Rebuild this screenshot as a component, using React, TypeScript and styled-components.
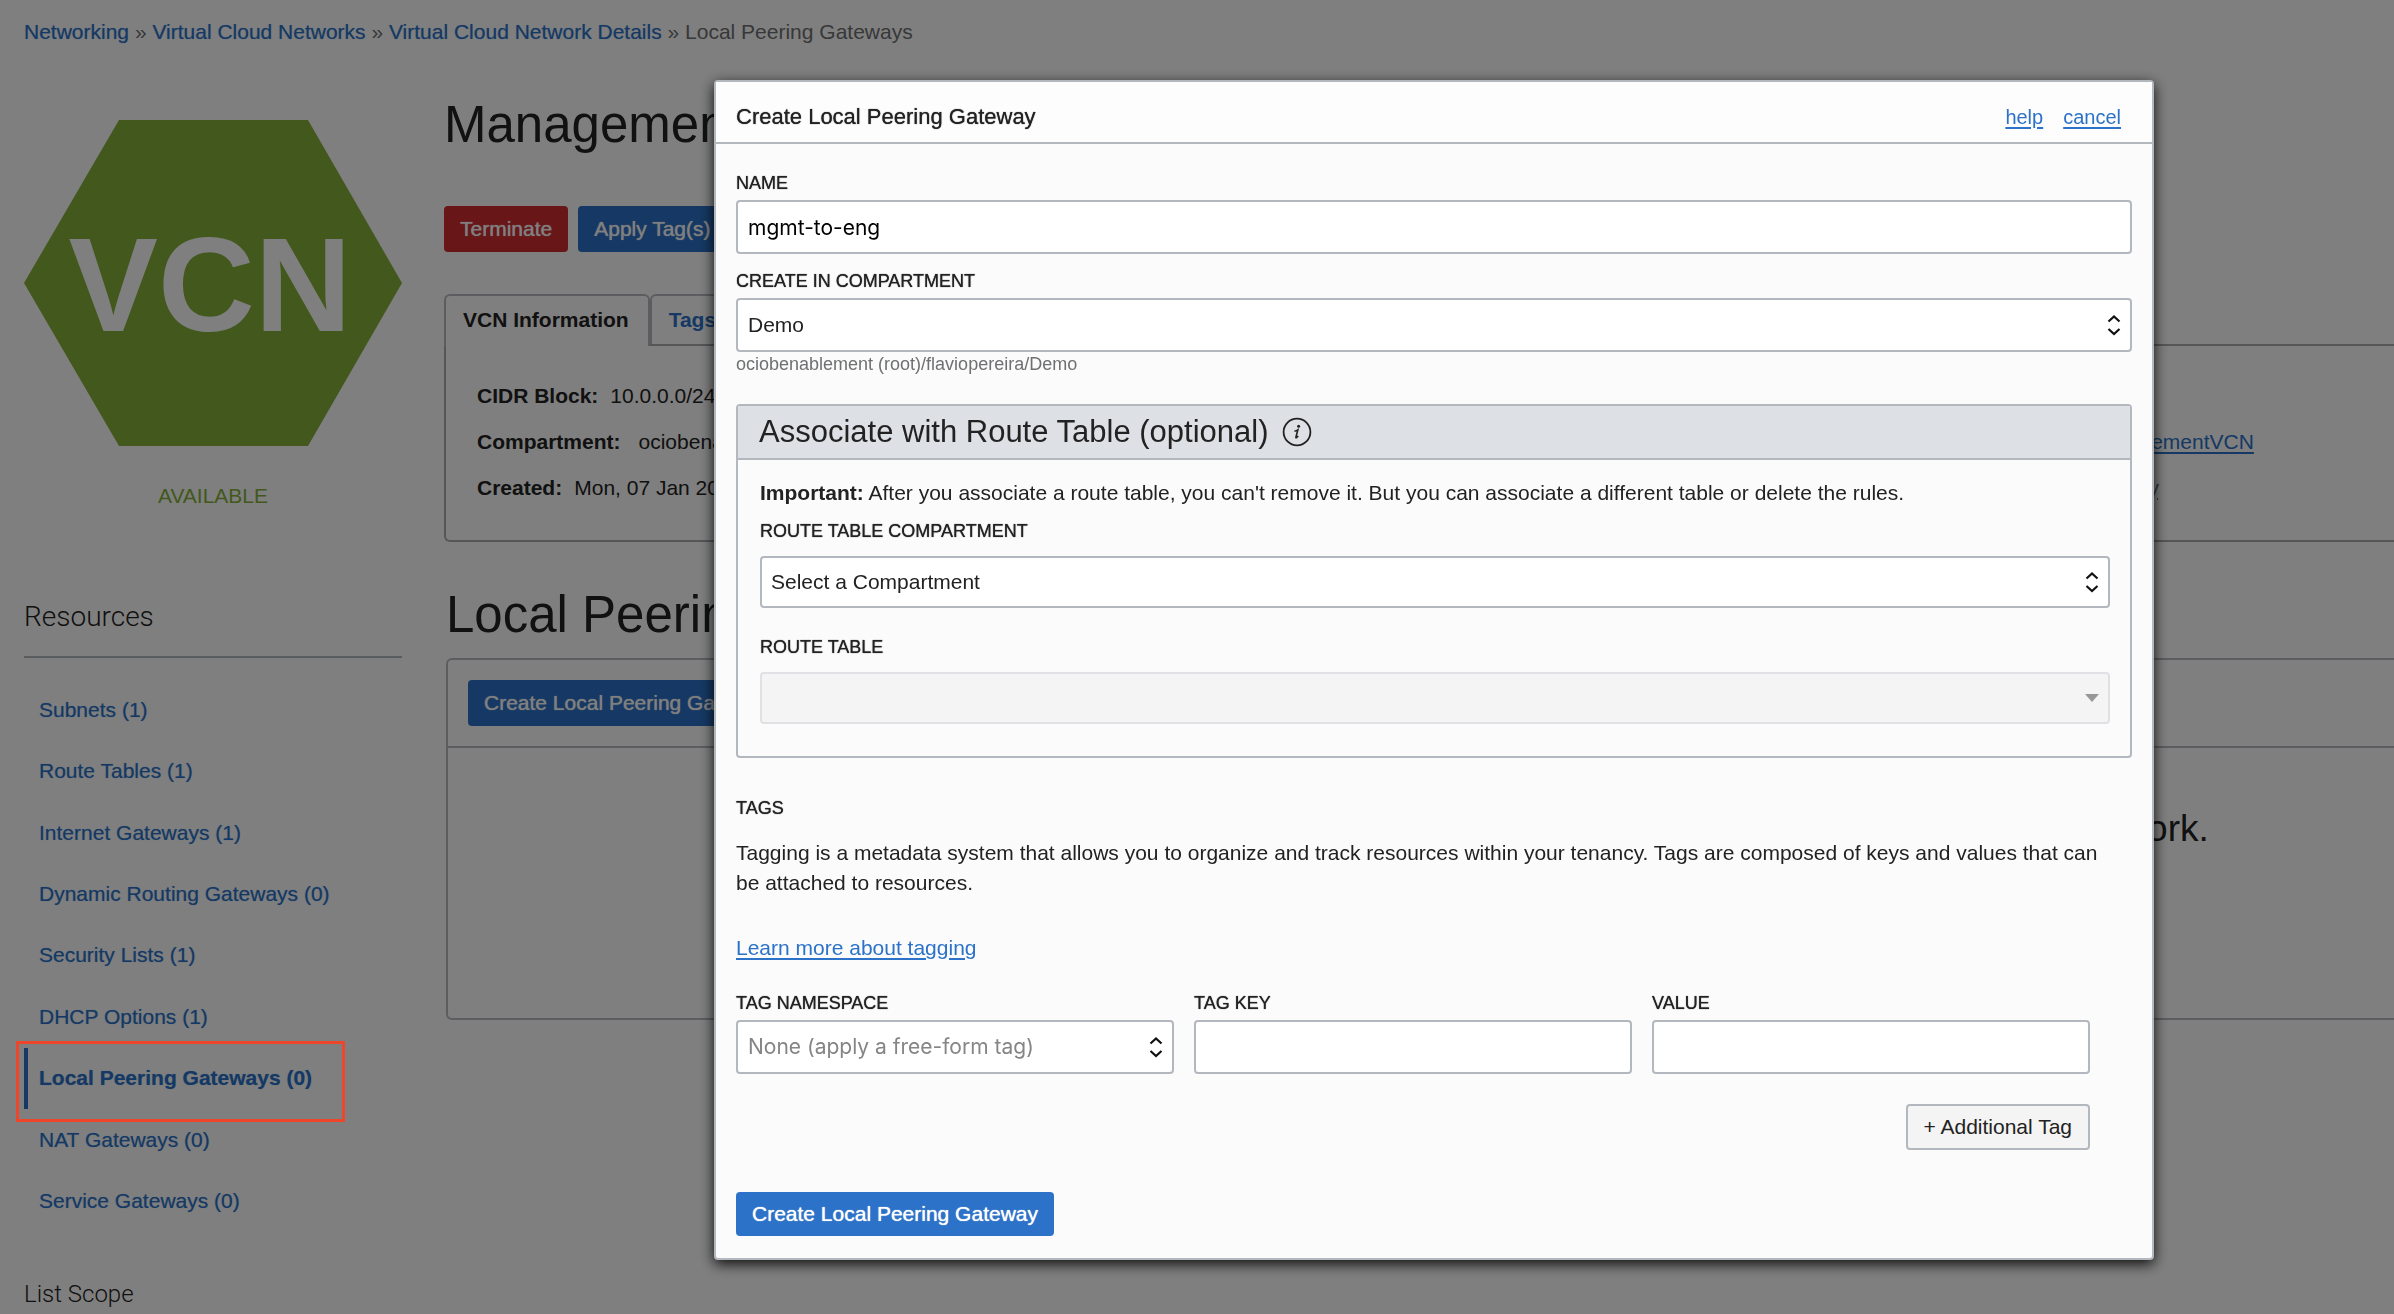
import React from "react";
import styled, { createGlobalStyle, css } from "styled-components";

const color = {
  text: "#222222",
  muted: "#6f7072",
  link: "#2b72c8",
  line: "#b3b8bf",
  green: "#84b13a",
  red: "#d12c2f",
};

const GlobalStyle = createGlobalStyle`
  *, *::before, *::after { box-sizing: border-box; }
  body {
    margin: 0;
    background: #ffffff;
    color: ${color.text};
    font-family: "Liberation Sans", Arial, Helvetica, sans-serif;
    font-size: 21px;
    line-height: 30px;
    overflow: hidden;
  }
  button, input, select { font: inherit; color: inherit; margin: 0; }
  h1, h2, h3, p, ul, dl, dd { margin: 0; padding: 0; font-weight: 400; }
`;

/* Between regular and bold: thickens the strokes of the regular face. */
const medium = css`
  text-shadow: 0 0 1px currentColor;
`;

const Link = styled.a<{ $underline?: boolean }>`
  color: ${color.link};
  text-decoration: ${(p) => (p.$underline ? "underline" : "none")};
  text-decoration-thickness: 2px;
  text-underline-offset: 3px;
`;

const Button = styled.button<{ $kind: "primary" | "danger" | "plain" }>`
  height: 46px;
  padding: 0 16px;
  border: 0;
  border-radius: 4px;
  white-space: nowrap;
  color: #ffffff;
  ${(p) =>
    p.$kind === "plain"
      ? css`
          border: 2px solid ${color.line};
          background: #f4f4f4;
          color: ${color.text};
        `
      : css`
          background: ${p.$kind === "danger" ? color.red : color.link};
          ${medium}
        `}
`;

/* ---------- page behind the dialog ---------- */

const Page = styled.div`
  padding: 17px 0 0 24px;
`;

const Breadcrumb = styled.nav`
  color: ${color.muted};
  a {
    text-shadow: 0 0 1px rgba(43, 114, 200, 0.5);
  }
`;

const Columns = styled.div`
  display: grid;
  grid-template-columns: 378px minmax(0, 1fr);
  column-gap: 42px;
  margin-top: 48px;
`;

const Sidebar = styled.aside`
  padding-top: 25px;
`;

const Hexagon = styled.svg`
  display: block;
  width: 100%;
  height: auto;
`;

const Status = styled.p`
  margin-top: 35px;
  text-align: center;
  color: ${color.green};
`;

const SideHeading = styled.h2`
  margin-top: 86px;
  padding-bottom: 19px;
  border-bottom: 2px solid ${color.line};
  font-family: Roboto, "Liberation Sans", sans-serif;
  font-weight: 300;
  font-size: 28px;
  line-height: 40px;
`;

const ScopeHeading = styled.h3`
  margin-top: 42px;
  font-family: Roboto, "Liberation Sans", sans-serif;
  font-weight: 300;
  font-size: 24px;
  line-height: 40px;
`;

const ResourceList = styled.ul`
  display: grid;
  grid-auto-rows: 1fr;
  height: 553px;
  margin-top: 21px;
  list-style: none;
`;

const ResourceItem = styled.li<{ $active?: boolean }>`
  position: relative;
  display: flex;
  align-items: center;
  padding-left: 11px;
  border-left: 4px solid ${(p) => (p.$active ? color.link : "transparent")};
  font-weight: ${(p) => (p.$active ? 700 : 400)};
  a {
    text-shadow: 0 0 1px rgba(43, 114, 200, 0.5);
  }
`;

const Callout = styled.span`
  position: absolute;
  z-index: 20;
  left: -12px;
  top: -7px;
  width: 329px;
  height: 81px;
  border: 3px solid #ee462a;
  pointer-events: none;
`;

const Main = styled.main`
  min-width: 0;
`;

const Title = styled.h1`
  font-size: 51px;
  line-height: 60px;
`;

const Actions = styled.div`
  display: flex;
  gap: 10px;
  margin-top: 51px;
`;

const Tabs = styled.div`
  display: flex;
  margin-top: 42px;
`;

const Tab = styled.button<{ $active?: boolean }>`
  height: 50px;
  padding: 0 19px 0 17px;
  border: 2px solid #bbbbc3;
  border-bottom: 0;
  border-radius: 6px 6px 0 0;
  background: #ffffff;
  color: ${(p) => (p.$active ? color.text : color.link)};
  font-weight: 700;
  line-height: 48px;
  ${(p) =>
    p.$active &&
    css`
      position: relative;
      height: 52px;
      margin-bottom: -2px;
      padding-bottom: 2px;
    `}
`;

const InfoPanel = styled.div`
  display: grid;
  grid-template-columns: 613fr 387fr;
  padding: 27px 0 29px 31px;
  border: 2px solid #adadb2;
  border-right: 0;
  border-bottom-left-radius: 6px;
`;

const Facts = styled.dl`
  line-height: 46px;
  white-space: nowrap;
`;

const Fact = styled.div<{ $wide?: boolean }>`
  display: flex;
  gap: ${(p) => (p.$wide ? 18 : 12)}px;
  height: 46px;
  dt {
    font-weight: 700;
  }
`;

const Hint = styled.span`
  color: ${color.muted};
  text-decoration: underline dotted 2px;
  text-underline-offset: 3px;
`;

const ListSection = styled.section`
  margin: 43px 0 0 2px;
`;

const ListTitle = styled.h2`
  font-size: 51px;
  line-height: 60px;
`;

const ListPanel = styled.div`
  margin-top: 13px;
  border: 2px solid #bbbbc3;
  border-right: 0;
  border-radius: 6px 0 0 6px;
`;

const ListToolbar = styled.div`
  padding: 20px;
  border-bottom: 2px solid #bbbbc3;
`;

const EmptyState = styled.p`
  padding: 56px 0 164px 112px;
  text-align: center;
  white-space: nowrap;
  font-size: 37px;
  line-height: 50px;
`;

/* ---------- dialog ---------- */

const Overlay = styled.div`
  position: fixed;
  inset: 0;
  z-index: 10;
  padding: 80px 240px 0 714px;
  background: rgba(0, 0, 0, 0.5);
`;

const Dialog = styled.form`
  border: 2px solid ${color.line};
  border-radius: 4px;
  background: #fbfbfb;
  box-shadow: 0 4px 14px rgba(0, 0, 0, 0.9);
`;

const DialogHeader = styled.header`
  display: flex;
  justify-content: space-between;
  padding: 20px 31px 10px 20px;
  border-bottom: 2px solid ${color.line};
  background: #fdfdfd;
`;

const DialogTitle = styled.h2`
  font-size: 22px;
  ${medium}
`;

const DialogLinks = styled.nav`
  display: flex;
  gap: 20px;
  font-size: 20px;
`;

const DialogBody = styled.div`
  padding: 27px 20px 22px;
`;

const Field = styled.div<{ $top?: number; $gap?: number }>`
  display: grid;
  row-gap: ${(p) => p.$gap ?? 5}px;
  margin-top: ${(p) => p.$top ?? 0}px;
`;

const Label = styled.label`
  font-size: 18px;
  line-height: 24px;
  ${medium}
`;

const TagsHeading = styled.h3`
  margin-top: 38px;
  font-size: 18px;
  line-height: 24px;
  ${medium}
`;

const control = css`
  width: 100%;
  height: 54px;
  padding: 0 10px;
  border: 2px solid ${color.line};
  border-radius: 4px;
  background: #ffffff;
`;

const TextInput = styled.input`
  ${control}
  font-family: Inter, "Liberation Sans", sans-serif;
  color: #000000;
`;

const SelectWrap = styled.div`
  position: relative;
`;

const SelectBox = styled.select<{ $short?: boolean; $placeholder?: boolean }>`
  ${control}
  appearance: none;
  display: block;
  ${(p) =>
    p.$short &&
    css`
      height: 52px;
      padding: 0 9px;
    `}
  ${(p) =>
    p.$placeholder &&
    css`
      font-family: Inter, "Liberation Sans", sans-serif;
      color: #858585;
    `}
  &:disabled {
    border-color: #dfe1e5;
    background: #f4f4f4;
    opacity: 1;
  }
`;

const SelectIcon = styled.svg`
  position: absolute;
  top: 50%;
  right: 10px;
  transform: translateY(-50%);
  pointer-events: none;
`;

const Path = styled.p`
  color: ${color.muted};
  font-size: 18px;
  line-height: 24px;
`;

const Group = styled.section`
  margin-top: 28px;
  border: 2px solid ${color.line};
  border-radius: 4px;
`;

const GroupHeader = styled.header`
  display: flex;
  align-items: center;
  gap: 13px;
  padding-left: 21px;
  border-bottom: 2px solid ${color.line};
  background: #dde1e5;
  h3 {
    font-size: 31px;
    line-height: 52px;
  }
`;

const GroupBody = styled.div`
  padding: 18px 20px 32px 22px;
`;

const Paragraph = styled.p<{ $top?: number }>`
  margin-top: ${(p) => p.$top ?? 0}px;
  padding-right: 20px;
`;

const TagArea = styled.div`
  padding-right: 42px;
`;

const TagRow = styled.div`
  display: grid;
  grid-template-columns: repeat(3, 1fr);
  column-gap: 20px;
  margin-top: 28px;
`;

const TagActions = styled.div`
  display: flex;
  justify-content: flex-end;
  margin-top: 30px;
`;

const SubmitButton = styled(Button)`
  height: 44px;
  margin-top: 42px;
`;

interface SelectProps {
  id: string;
  options: string[];
  short?: boolean;
  placeholder?: boolean;
  disabled?: boolean;
}

function Select({ id, options, short, placeholder, disabled }: SelectProps) {
  return (
    <SelectWrap>
      <SelectBox id={id} $short={short} $placeholder={placeholder} disabled={disabled}>
        {options.map((o) => (
          <option key={o}>{o}</option>
        ))}
      </SelectBox>
      {disabled ? (
        <SelectIcon width="16" height="8" viewBox="0 0 16 8">
          <path d="M1 0h14L8 8z" fill="#979797" />
        </SelectIcon>
      ) : (
        <SelectIcon width="16" height="24" viewBox="0 0 16 24" fill="none" stroke="#111" strokeWidth="2.2">
          <path d="M2.5 8.5 8 3.5l5.5 5M2.5 16l5.5 5 5.5-5" />
        </SelectIcon>
      )}
    </SelectWrap>
  );
}

function InfoIcon() {
  return (
    <svg width="30" height="30" viewBox="0 0 30 30" role="img" aria-label="Information">
      <circle cx="15" cy="15" r="13.4" fill="none" stroke="#222" strokeWidth="1.8" />
      <circle cx="16.6" cy="9.3" r="1.5" fill="#222" />
      <path
        d="M12.4 14.2c1.5-.3 2.6-.7 3.4-1.3l-1.9 7.4c-.2.9.6.7 2.3-1.3"
        fill="none"
        stroke="#222"
        strokeWidth="1.6"
      />
    </svg>
  );
}

const resources = [
  "Subnets (1)",
  "Route Tables (1)",
  "Internet Gateways (1)",
  "Dynamic Routing Gateways (0)",
  "Security Lists (1)",
  "DHCP Options (1)",
  "Local Peering Gateways (0)",
  "NAT Gateways (0)",
  "Service Gateways (0)",
];
const activeResource = "Local Peering Gateways (0)";

export default function App() {
  return (
    <>
      <GlobalStyle />
      <Page>
        <Breadcrumb aria-label="Breadcrumb">
          <Link href="#networking">Networking</Link> » <Link href="#vcns">Virtual Cloud Networks</Link> »{" "}
          <Link href="#vcn">Virtual Cloud Network Details</Link> » Local Peering Gateways
        </Breadcrumb>
        <Columns>
          <Sidebar>
            <Hexagon viewBox="0 0 378 326" role="img" aria-label="VCN">
              <path d="M95 0h189l94 163-94 163H95L0 163z" fill={color.green} />
              <text
                x="186"
                y="211"
                textAnchor="middle"
                fontFamily="Liberation Sans, Arial, sans-serif"
                fontWeight="700"
                fontSize="134"
                fill="#ffffff"
              >
                VCN
              </text>
            </Hexagon>
            <Status>AVAILABLE</Status>
            <SideHeading>Resources</SideHeading>
            <ResourceList>
              {resources.map((r) => (
                <ResourceItem key={r} $active={r === activeResource}>
                  <Link href="#resource">{r}</Link>
                  {r === activeResource && <Callout />}
                </ResourceItem>
              ))}
            </ResourceList>
            <ScopeHeading>List Scope</ScopeHeading>
          </Sidebar>
          <Main>
            <Title>ManagementVCN</Title>
            <Actions>
              <Button type="button" $kind="danger">Terminate</Button>
              <Button type="button" $kind="primary">Apply Tag(s)</Button>
            </Actions>
            <Tabs>
              <Tab type="button" $active>VCN Information</Tab>
              <Tab type="button">Tags</Tab>
            </Tabs>
            <InfoPanel>
              <Facts>
                <Fact>
                  <dt>CIDR Block:</dt>
                  <dd>10.0.0.0/24</dd>
                </Fact>
                <Fact $wide>
                  <dt>Compartment:</dt>
                  <dd>ociobenablement</dd>
                </Fact>
                <Fact>
                  <dt>Created:</dt>
                  <dd>Mon, 07 Jan 2019</dd>
                </Fact>
              </Facts>
              <Facts>
                <Fact />
                <Fact>
                  <dt>Default Route Table:</dt>
                  <dd>
                    <Link href="#route-table" $underline>Default Route Table for ManagementVCN</Link>
                  </dd>
                </Fact>
                <Fact>
                  <dt>DNS Domain Name:</dt>
                  <dd>
                    <Hint>Not available without a directory</Hint>
                  </dd>
                </Fact>
              </Facts>
            </InfoPanel>
            <ListSection>
              <ListTitle>Local Peering Gateways</ListTitle>
              <ListPanel>
                <ListToolbar>
                  <Button type="button" $kind="primary">Create Local Peering Gateway</Button>
                </ListToolbar>
                <EmptyState>
                  There are no Local Peering Gateways in this Compartment for this Virtual Cloud Network.
                </EmptyState>
              </ListPanel>
            </ListSection>
          </Main>
        </Columns>
      </Page>

      <Overlay>
        <Dialog role="dialog" aria-label="Create Local Peering Gateway">
          <DialogHeader>
            <DialogTitle>Create Local Peering Gateway</DialogTitle>
            <DialogLinks>
              <Link href="#help" $underline>help</Link>
              <Link href="#cancel" $underline>cancel</Link>
            </DialogLinks>
          </DialogHeader>
          <DialogBody>
            <Field>
              <Label htmlFor="name">NAME</Label>
              <TextInput id="name" type="text" defaultValue="mgmt-to-eng" />
            </Field>
            <Field $top={15}>
              <Label htmlFor="compartment">CREATE IN COMPARTMENT</Label>
              <Select id="compartment" options={["Demo"]} />
            </Field>
            <Path>ociobenablement (root)/flaviopereira/Demo</Path>

            <Group>
              <GroupHeader>
                <h3>Associate with Route Table (optional)</h3>
                <InfoIcon />
              </GroupHeader>
              <GroupBody>
                <Paragraph>
                  <b>Important:</b> After you associate a route table, you can't remove it. But you can associate a
                  different table or delete the rules.
                </Paragraph>
                <Field $top={11} $gap={13}>
                  <Label htmlFor="rt-compartment">ROUTE TABLE COMPARTMENT</Label>
                  <Select id="rt-compartment" short options={["Select a Compartment"]} />
                </Field>
                <Field $top={27} $gap={13}>
                  <Label htmlFor="route-table">ROUTE TABLE</Label>
                  <Select id="route-table" short disabled options={[]} />
                </Field>
              </GroupBody>
            </Group>

            <TagsHeading>TAGS</TagsHeading>
            <Paragraph $top={18}>
              Tagging is a metadata system that allows you to organize and track resources within your tenancy. Tags
              are composed of keys and values that can be attached to resources.
            </Paragraph>
            <Paragraph $top={35}>
              <Link href="#tagging" $underline>Learn more about tagging</Link>
            </Paragraph>
            <TagArea>
              <TagRow>
                <Field>
                  <Label htmlFor="tag-namespace">TAG NAMESPACE</Label>
                  <Select id="tag-namespace" placeholder options={["None (apply a free-form tag)"]} />
                </Field>
                <Field>
                  <Label htmlFor="tag-key">TAG KEY</Label>
                  <TextInput id="tag-key" type="text" />
                </Field>
                <Field>
                  <Label htmlFor="tag-value">VALUE</Label>
                  <TextInput id="tag-value" type="text" />
                </Field>
              </TagRow>
              <TagActions>
                <Button type="button" $kind="plain">+ Additional Tag</Button>
              </TagActions>
            </TagArea>
            <SubmitButton type="button" $kind="primary">Create Local Peering Gateway</SubmitButton>
          </DialogBody>
        </Dialog>
      </Overlay>
    </>
  );
}
